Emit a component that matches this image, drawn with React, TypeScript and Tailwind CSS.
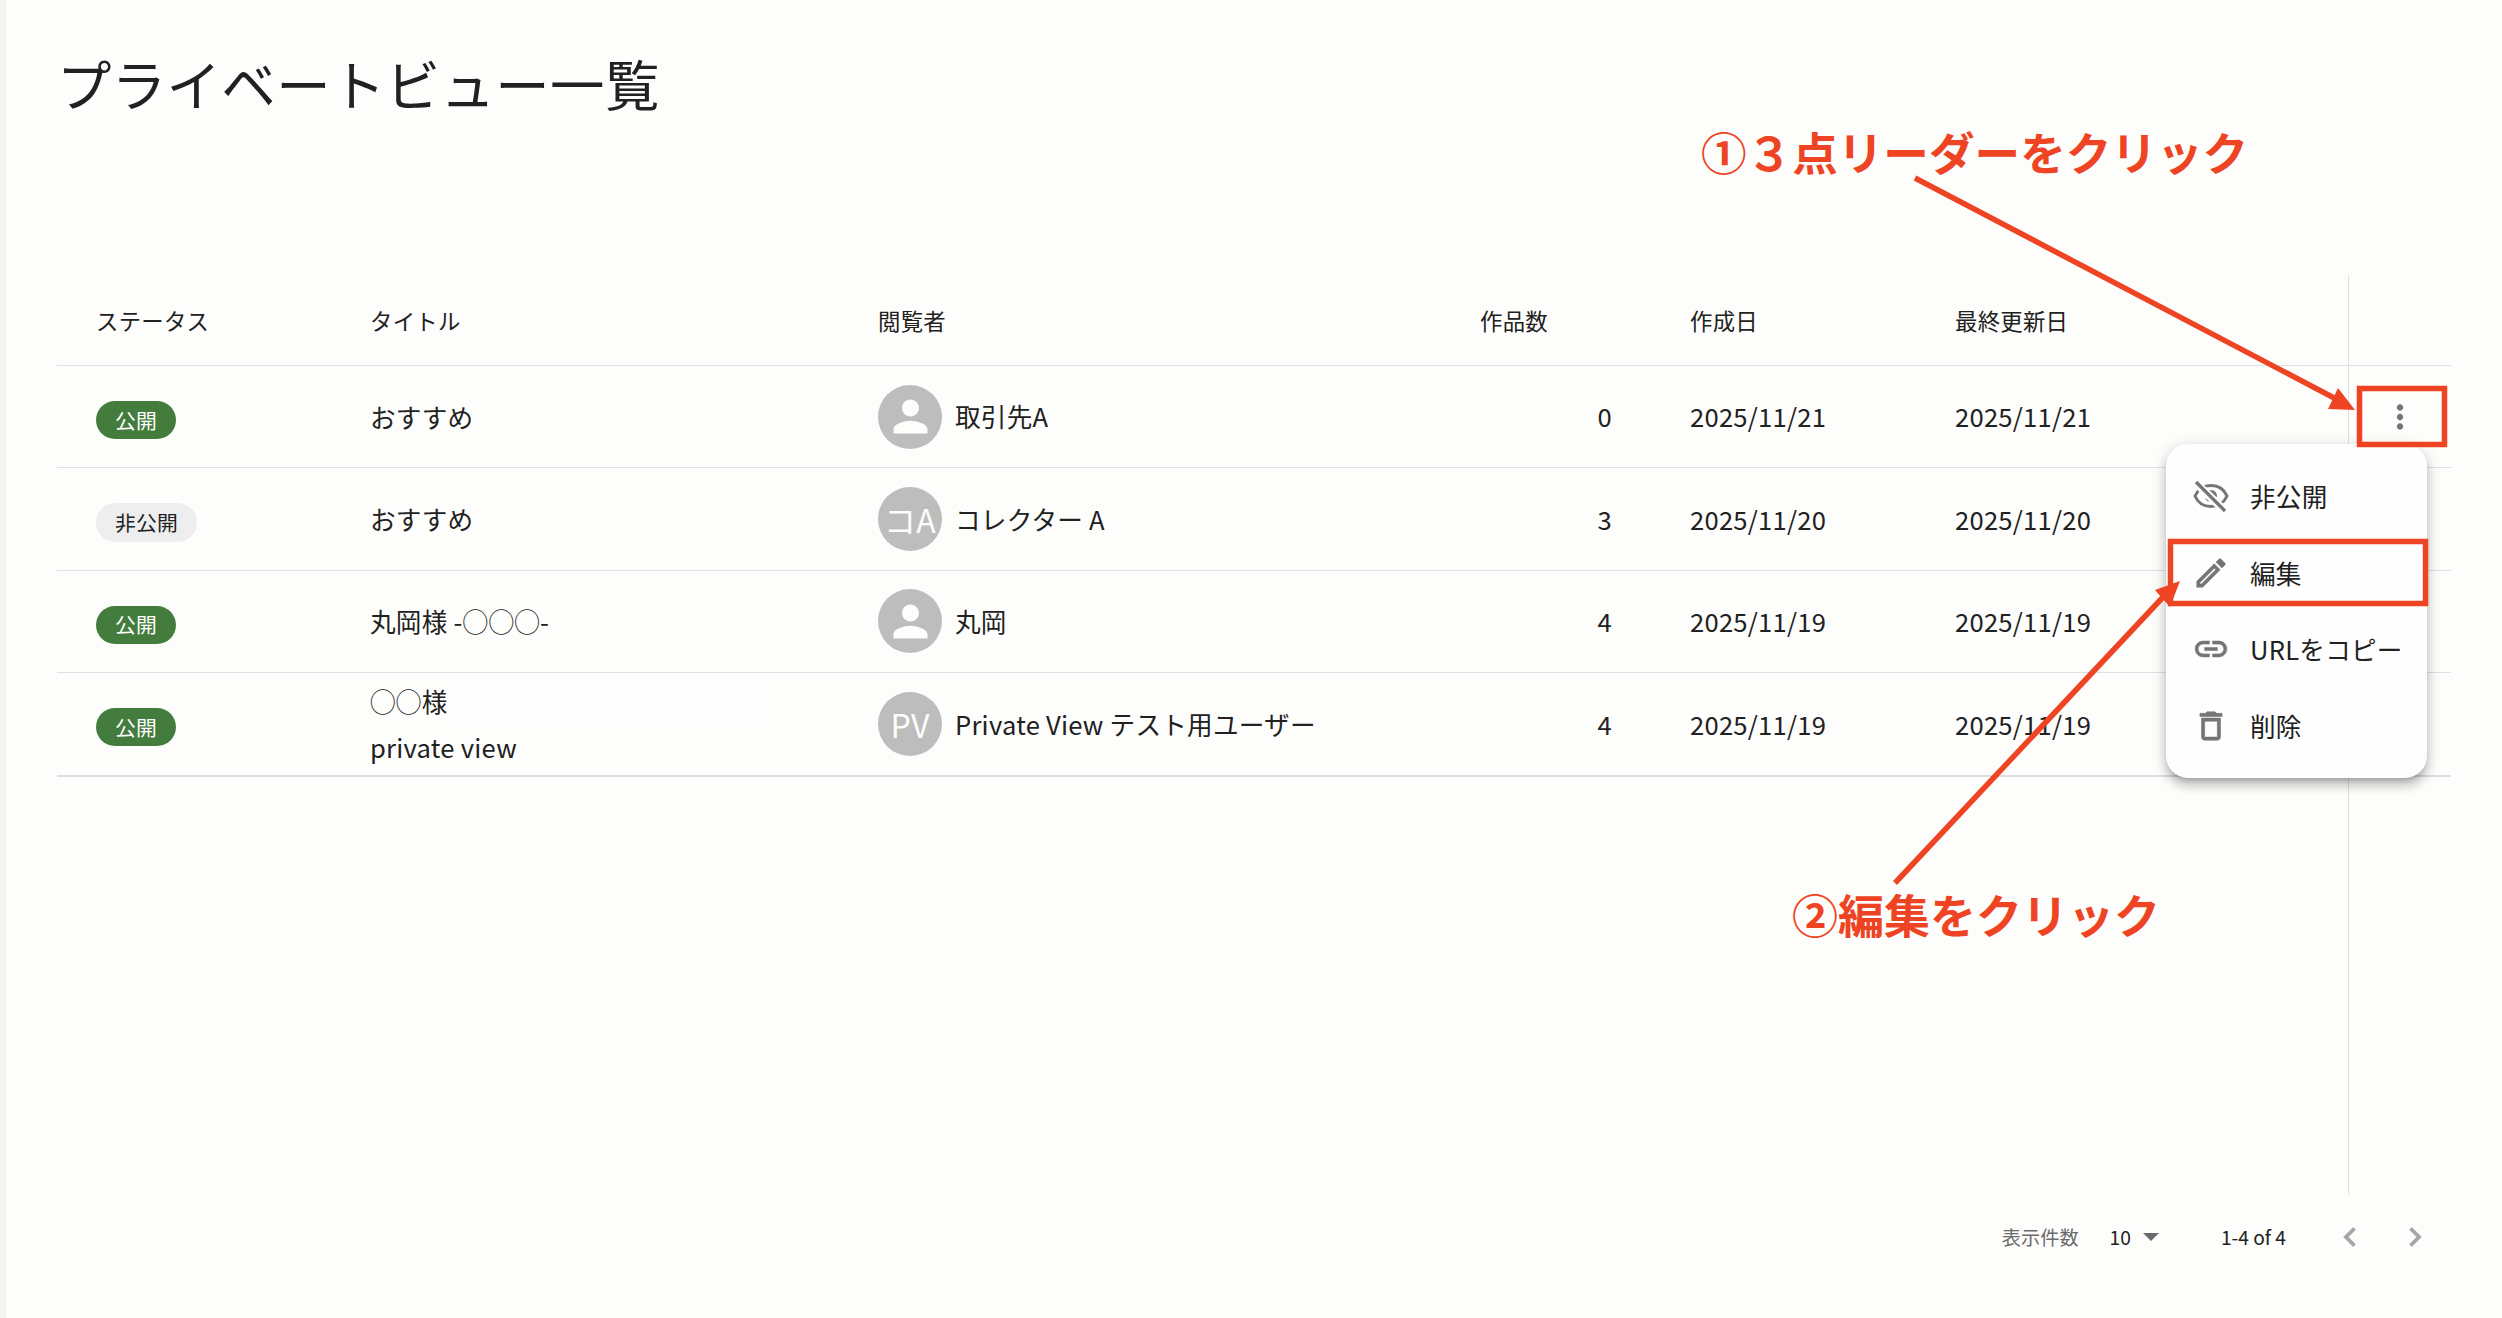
import { MdMoreVert, MdPerson } from 'react-icons/md';

interface ViewRow {
  id: number;
  published: boolean;
  title: string[];
  viewer: string;
  initials?: string;
  count: number;
  created: string;
  updated: string;
}

const rows: ViewRow[] = [
  { id: 1, published: true, title: ['おすすめ'], viewer: '取引先A', count: 0, created: '2025/11/21', updated: '2025/11/21' },
  { id: 2, published: false, title: ['おすすめ'], viewer: 'コレクター A', initials: 'コA', count: 3, created: '2025/11/20', updated: '2025/11/20' },
  { id: 3, published: true, title: ['丸岡様 -◯◯◯-'], viewer: '丸岡', count: 4, created: '2025/11/19', updated: '2025/11/19' },
  { id: 4, published: true, title: ['◯◯様', 'private view'], viewer: 'Private View テスト用ユーザー', initials: 'PV', count: 4, created: '2025/11/19', updated: '2025/11/19' },
];

const gridCols = 'grid grid-cols-[313px_508px_560px_174px_343px_393px] items-center';

// material paths, with a thin stroke because the screenshot's icons look heavier
function Glyph({ d, weight = 0.35, className }: { d: string; weight?: number; className?: string }) {
  return (
    <svg viewBox="0 0 24 24" fill="currentColor" stroke="currentColor" strokeWidth={weight} className={`h-[38px] w-[38px] ${className ?? ''}`}>
      <path d={d} />
    </svg>
  );
}

function EyeOffIcon() {
  return (
    <svg viewBox="0 0 38 38" className="h-[38px] w-[38px]" fill="none">
      <path d="M3 19C6 12 12 8.5 19 8.5S32 12 35 19c-3 7-9 10.5-16 10.5S6 26 3 19z" stroke="#757575" strokeWidth="3" />
      <circle cx="19" cy="19" r="6" fill="#757575" />
      <path d="M4 6 33 34" stroke="#fefefe" strokeWidth="8" />
      <path d="M4 5 33 34" stroke="#757575" strokeWidth="3.2" />
    </svg>
  );
}

const menuItems = [
  { label: '非公開', icon: <EyeOffIcon /> },
  {
    label: '編集',
    icon: <Glyph d="M14.06 9.02l.92.92L5.92 19H5v-.92l9.06-9.06M17.66 3c-.25 0-.51.1-.7.29l-1.83 1.83 3.75 3.75 1.83-1.83c.39-.39.39-1.02 0-1.41l-2.34-2.34c-.2-.2-.45-.29-.71-.29zm-3.6 3.19L3 17.25V21h3.75L17.81 9.94l-3.75-3.75z" />,
  },
  {
    label: 'URLをコピー',
    icon: <Glyph d="M3.9 12c0-1.71 1.39-3.1 3.1-3.1h4V7H7c-2.76 0-5 2.24-5 5s2.24 5 5 5h4v-1.9H7c-1.71 0-3.1-1.39-3.1-3.1zM8 13h8v-2H8v2zm9-6h-4v1.9h4c1.71 0 3.1 1.39 3.1 3.1s-1.39 3.1-3.1 3.1h-4V17h4c2.76 0 5-2.24 5-5s-2.24-5-5-5z" />,
  },
  {
    label: '削除',
    icon: <Glyph d="M16 9v10H8V9h8m-1.5-6h-5l-1 1H5v2h14V4h-3.5l-1-1zM18 7H6v12c0 1.1.9 2 2 2h8c1.1 0 2-.9 2-2V7z" />,
  },
];

function StatusChip({ published }: { published: boolean }) {
  return published ? (
    <span className="mt-[7px] flex h-[38px] w-[80px] items-center justify-center rounded-full bg-[#447c3d] text-[20.8px] text-white">
      公開
    </span>
  ) : (
    <span className="mt-[7px] flex h-[39px] w-[101px] items-center justify-center rounded-full bg-[#eeeeee] text-[20.8px] text-[#212121]">
      非公開
    </span>
  );
}

function ViewerAvatar({ initials }: { initials?: string }) {
  return (
    <span className="flex h-[64px] w-[64px] shrink-0 items-center justify-center rounded-full bg-[#bdbdbd] text-[32px] text-[#fdfdfb]">
      {initials ?? <MdPerson size={51} />}
    </span>
  );
}

export default function App() {
  return (
    <div className="relative flex h-[1318px] w-full overflow-hidden bg-[#fdfdfb] font-['Noto_Sans_CJK_JP',sans-serif] text-[#212121]">
      <div className="w-[6px] shrink-0 bg-[#f3f5f0]" />

      <main className="flex min-w-0 flex-1 flex-col pl-[51px] pr-[51px]">
        <h1 className="h-[275px] pt-[49px] text-[54.4px] leading-[68px] font-normal tracking-[0.4px]">プライベートビュー一覧</h1>

        <div className="flex h-[920px]">
          <div className="w-[2291px]">
            <div className={`${gridCols} h-[91px] border-b border-[#e0e0e0] pt-[2px] text-[22.4px] tracking-[0.24px]`}>
              <span className="pl-[39px]">ステータス</span>
              <span>タイトル</span>
              <span>閲覧者</span>
              <span className="pr-[64px] text-right">作品数</span>
              <span className="pl-[78px]">作成日</span>
              <span>最終更新日</span>
            </div>

            {rows.map((row, i) => (
              <div
                key={row.id}
                className={`${gridCols} text-[25.6px] tracking-[0.24px] ${
                  i === rows.length - 1 ? 'h-[104px] border-b-2 border-[#dedede]' : 'h-[102.33px] border-b border-[#e0e0e0]'
                }`}
              >
                <div className="pl-[39px]">
                  <StatusChip published={row.published} />
                </div>
                <div className="relative leading-[46px]">
                  {row.title.map((line) => (
                    <div key={line}>{line}</div>
                  ))}
                  {row.title.length > 1 && (
                    <div className="absolute left-[82px] top-[2px] h-[47px] w-[311px] bg-[#fefefe]" />
                  )}
                </div>
                <div className="flex items-center gap-[13px]">
                  <ViewerAvatar initials={row.initials} />
                  <span>{row.viewer}</span>
                </div>
                <span className="text-right">{row.count}</span>
                <span className="pl-[78px]">{row.created}</span>
                <span>{row.updated}</span>
              </div>
            ))}
          </div>

          <div className="flex-1 border-l border-[#e0e0e0]">
            <div className="h-[91px] border-b border-[#e0e0e0]" />
            <div className="flex h-[102.33px] items-center border-b border-[#e0e0e0] pl-[32px] text-[#757575]">
              <MdMoreVert size={38} />
            </div>
            <div className="h-[102.33px] border-b border-[#e0e0e0]" />
            <div className="h-[102.33px] border-b border-[#e0e0e0]" />
            <div className="h-[104px] border-b-2 border-[#dedede]" />
          </div>
        </div>

        <div className="flex h-[84px] items-center justify-end pr-[17px] text-[19.2px]">
          <span className="text-[#6b6b6b]">表示件数</span>
          <span className="ml-[31px]">10</span>
          <svg viewBox="0 0 16 8" className="ml-[12px] h-[8px] w-[16px] fill-[#6b6b6b]">
            <path d="M0 0h16L8 8z" />
          </svg>
          <span className="ml-[62px]">1-4 of 4</span>
          <Glyph d="M15.41 7.41L14 6l-6 6 6 6 1.41-1.41L10.83 12z" weight={0.5} className="ml-[45px] text-[#a5a5a5]" />
          <Glyph d="M10 6L8.59 7.41 13.17 12l-4.58 4.59L10 18l6-6z" weight={0.5} className="ml-[27px] text-[#a5a5a5]" />
        </div>
      </main>

      <div className="absolute left-[2166px] top-[444px] w-[261px] rounded-[22px] bg-[#fefefe] py-[14px] text-[25.6px] tracking-[0.24px] shadow-[0_5px_5px_-3px_rgba(0,0,0,0.2),0_8px_10px_1px_rgba(0,0,0,0.14),0_3px_14px_2px_rgba(0,0,0,0.12)]">
        {menuItems.map((item) => (
          <div key={item.label} className="flex h-[76.6px] items-center pl-[26px]">
            <span className="flex w-[58px] text-[#757575]">{item.icon}</span>
            <span>{item.label}</span>
          </div>
        ))}
      </div>

      <svg className="pointer-events-none absolute inset-0" width="2502" height="1318" viewBox="0 0 2502 1318">
        <g fill="none" stroke="#ee4423" strokeWidth="5.5">
          <rect x="2359.5" y="388.5" width="85" height="56" />
          <rect x="2170.5" y="541.5" width="255" height="62" />
          <path d="M1915 178 2338 400" />
          <path d="M1895 883 2165 595" />
        </g>
        <path d="M2355 410 2338 388 2328 409z" fill="#ee4423" />
        <path d="M2180 581 2155 590 2170 607z" fill="#ee4423" />
      </svg>

      <div className="absolute left-[1701px] top-[117px] text-[45.6px] leading-[68px] font-bold text-[#ee4423]">
        ①３点リーダーをクリック
      </div>
      <div className="absolute left-[1792px] top-[879px] text-[46px] leading-[68px] font-bold text-[#ee4423]">
        ②編集をクリック
      </div>
    </div>
  );
}
